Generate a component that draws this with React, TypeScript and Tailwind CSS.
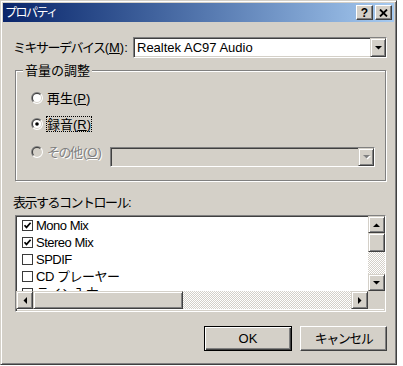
import React from 'react';

const raised =
  'border border-t-white border-l-white border-r-[#404040] border-b-[#404040] shadow-[inset_-1px_-1px_0_#808080] bg-[#d4d0c8]';
const sbtn =
  'border border-t-[#d4d0c8] border-l-[#d4d0c8] border-r-[#404040] border-b-[#404040] shadow-[inset_1px_1px_0_#fff,inset_-1px_-1px_0_#808080] bg-[#d4d0c8]';
const sunken =
  'border border-t-[#808080] border-l-[#808080] border-r-white border-b-white shadow-[inset_1px_1px_0_#404040,inset_-1px_-1px_0_#d4d0c8]';
const checker =
  'bg-[image:repeating-conic-gradient(#d4d0c8_0_25%,#ffffff_0_50%)] bg-[length:2px_2px]';

type Dir = 'up' | 'down' | 'left' | 'right';

const Arrow = ({ dir, disabled = false }: { dir: Dir; disabled?: boolean }) => {
  const pts: Record<Dir, string> = {
    up: '0,4 7,4 3.5,0.5',
    down: '0,0 7,0 3.5,3.5',
    left: '4,0 4,7 0.5,3.5',
    right: '0,0 0,7 3.5,3.5',
  };
  const vertical = dir === 'up' || dir === 'down';
  return (
    <svg width={vertical ? 7 : 4} height={vertical ? 4 : 7} viewBox={vertical ? '0 0 7 4' : '0 0 4 7'} className="overflow-visible">
      {disabled && <polygon points={pts[dir]} fill="#fff" transform="translate(1,1)" />}
      <polygon points={pts[dir]} fill={disabled ? '#808080' : '#000'} />
    </svg>
  );
};

const half = (r: number, color: string, tl: boolean) => {
  const d = r * 0.7071;
  const x1 = 6 - d;
  const y1 = 6 + d;
  const x2 = 6 + d;
  const y2 = 6 - d;
  return <path d={`M${x1} ${y1} A${r} ${r} 0 0 ${tl ? 1 : 0} ${x2} ${y2} Z`} fill={color} />;
};

const Radio = ({ checked = false, disabled = false }: { checked?: boolean; disabled?: boolean }) => (
  <svg width="12" height="12" viewBox="0 0 12 12" className="shrink-0">
    {half(6, '#808080', true)}
    {half(6, '#ffffff', false)}
    {half(5, '#404040', true)}
    {half(5, '#d4d0c8', false)}
    <circle cx="6" cy="6" r="4" fill={disabled ? '#d4d0c8' : '#ffffff'} />
    {checked && <circle cx="6" cy="6" r="1.8" fill="#000" />}
  </svg>
);

const Check = ({ checked }: { checked: boolean }) => (
  <span className="w-[11px] h-[11px] border border-[#3a3a3a] bg-white flex items-center justify-center shrink-0">
    {checked && (
      <svg width="9" height="9" viewBox="0 0 9 9">
        <polyline points="1.5,4.2 3.5,6.4 7.6,1.8" fill="none" stroke="#000" strokeWidth="1.7" />
      </svg>
    )}
  </span>
);

const Kana = ({ children }: { children: React.ReactNode }) => (
  <span className="tracking-[-1.5px]">{children}</span>
);

const items = [
  { label: 'Mono Mix', checked: true },
  { label: 'Stereo Mix', checked: true },
  { label: 'SPDIF', checked: false },
  { label: 'CD プレーヤー', checked: false },
  { label: 'ライン入力', checked: false },
  { label: 'マイク', checked: false },
];

export default function App() {
  return (
    <div className="w-[403px] h-[366px] bg-white font-['Liberation_Sans','Noto_Sans_CJK_JP',sans-serif] text-[13px] text-black leading-none">
      <div className="w-[397px] h-[365px] bg-[#d4d0c8] border border-t-[#d4d0c8] border-l-[#d4d0c8] border-r-[#404040] border-b-[#404040] shadow-[inset_1px_1px_0_#fff,inset_-1px_-1px_0_#808080] p-[2px] flex flex-col">
        {/* title bar */}
        <div className="h-[19px] bg-linear-to-r from-[#0a246a] to-[#a6caf0] flex items-center justify-between pl-[2px] pr-[2px] shrink-0">
          <span className="text-white text-[12px] tracking-[-1.5px]">プロパティ</span>
          <div className="flex gap-[2px]">
            <div className={`${raised} w-[17px] h-[15px] flex items-center justify-center`}>
              <span className="text-[12px] font-bold leading-none mt-[1px]">?</span>
            </div>
            <div className={`${raised} w-[17px] h-[15px] flex items-center justify-center`}>
              <svg width="9" height="8" viewBox="0 0 9 8">
                <path d="M1 0.5 L8 7.5 M8 0.5 L1 7.5" stroke="#000" strokeWidth="1.8" />
              </svg>
            </div>
          </div>
        </div>

        <div className="flex-1 flex flex-col pl-[10px] pr-[7px]">
          {/* mixer device */}
          <div className="mt-[15px] h-[21px] flex items-center">
            <span className="flex-1">
              <Kana>ミキサーデバイス</Kana>(<span className="underline">M</span>):
            </span>
            <div className={`${sunken} w-[254px] h-[21px] bg-white flex items-center pl-[3px]`}>
              <span className="flex-1">Realtek AC97 Audio</span>
              <div className={`${sbtn} w-[16px] h-full flex items-center justify-center`}>
                <Arrow dir="down" />
              </div>
            </div>
          </div>

          {/* group box */}
          <div className="relative mt-[12px] ml-[2px] w-[371px] h-[111px] border border-[#808080] shadow-[inset_1px_1px_0_#fff,1px_1px_0_#fff] pl-[15px] pr-[10px] pt-[19px] flex flex-col">
            <span className="absolute top-[-7px] left-[7px] px-[2px] bg-[#d4d0c8] leading-[14px]">音量の調整</span>
            <div className="h-[16px] flex items-center gap-[4px]">
              <Radio />
              <span>
                再生(<span className="underline">P</span>)
              </span>
            </div>
            <div className="mt-[10px] h-[16px] flex items-center gap-[3px]">
              <Radio checked />
              <span className="border border-dotted border-black h-[16px] flex items-center px-[0px]">
                録音(<span className="underline">R</span>)
              </span>
            </div>
            <div className="mt-[12px] flex items-start">
              <div className="w-[79px] h-[16px] flex items-center gap-[4px] text-[#808080] [text-shadow:1px_1px_0_#fff]">
                <Radio disabled />
                <span>
                  <Kana>その</Kana>他(<span className="underline">O</span>)
                </span>
              </div>
              <div className={`${sunken} mt-[3px] w-[265px] h-[20px] bg-[#d4d0c8] flex justify-end`}>
                <div className={`${sbtn} w-[16px] h-full flex items-center justify-center`}>
                  <Arrow dir="down" disabled />
                </div>
              </div>
            </div>
          </div>

          {/* controls list */}
          <div className="mt-[15px] leading-[14px]">
            <Kana>表示するコントロール</Kana>:
          </div>
          <div className={`${sunken} mt-[5px] ml-[2px] w-[371px] h-[97px] bg-white flex flex-col`}>
            <div className="h-[75px] flex">
              <div className="flex-1 overflow-hidden pt-[1px]">
                {items.map((it) => (
                  <div key={it.label} className="h-[17px] flex items-center pl-[6px] gap-[3px] whitespace-nowrap">
                    <Check checked={it.checked} />
                    <span className="tracking-[-0.5px]">{it.label}</span>
                  </div>
                ))}
              </div>
              <div className="w-[17px] flex flex-col">
                <div className={`${sbtn} h-[17px] flex items-center justify-center`}>
                  <Arrow dir="up" />
                </div>
                <div className={`${sbtn} h-[19px]`} />
                <div className={`flex-1 ${checker}`} />
                <div className={`${sbtn} h-[17px] flex items-center justify-center`}>
                  <Arrow dir="down" />
                </div>
              </div>
            </div>
            <div className="h-[18px] flex">
              <div className={`${sbtn} w-[17px] flex items-center justify-center`}>
                <Arrow dir="left" />
              </div>
              <div className={`${sbtn} w-[150px]`} />
              <div className={`flex-1 ${checker}`} />
              <div className={`${sbtn} w-[17px] flex items-center justify-center`}>
                <Arrow dir="right" />
              </div>
              <div className="w-[17px] bg-[#d4d0c8]" />
            </div>
          </div>

          {/* buttons */}
          <div className="mt-[14px] flex justify-end gap-[8px]">
            <button className="w-[88px] h-[25px] bg-[#d4d0c8] border border-black shadow-[inset_1px_1px_0_#fff,inset_-1px_-1px_0_#404040,inset_-2px_-2px_0_#808080] flex items-center justify-center">
              OK
            </button>
            <button className={`${raised} w-[87px] h-[25px] flex items-center justify-center`}>
              <Kana>キャンセル</Kana>
            </button>
          </div>
        </div>
      </div>
    </div>
  );
}
